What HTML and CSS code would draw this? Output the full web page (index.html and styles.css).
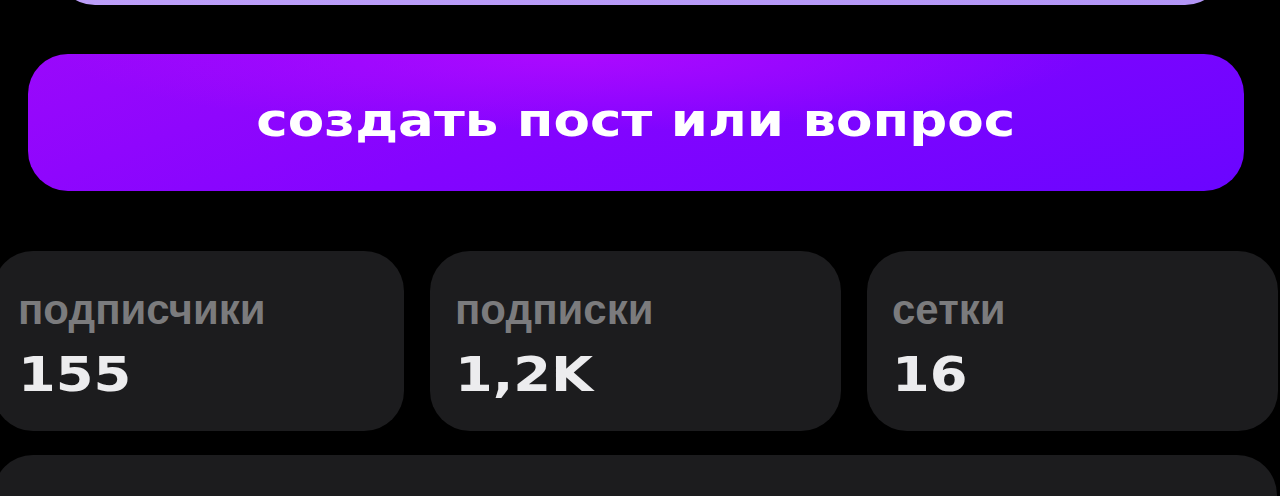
FILE: index.html
```html
<!DOCTYPE html>
<html lang="ru">
<head>
<meta charset="utf-8">
<link rel="stylesheet" href="styles.css">
</head>
<body>
<div class="page">
  <div class="top-pill"></div>
  <button class="create-btn"><span class="create-label">создать пост или вопрос</span></button>
  <div class="stats">
    <div class="stat-card">
      <div class="stat-label">подписчики</div>
      <div class="stat-value">155</div>
    </div>
    <div class="stat-card">
      <div class="stat-label">подписки</div>
      <div class="stat-value">1,2K</div>
    </div>
    <div class="stat-card">
      <div class="stat-label">сетки</div>
      <div class="stat-value">16</div>
    </div>
  </div>
  <div class="bottom-card"></div>
</div>
</body>
</html>
```
FILE: styles.css
```css
html, body {
  margin: 0;
  padding: 0;
  background: #000;
}
body {
  width: 1280px;
  height: 496px;
  overflow: hidden;
}
.page {
  display: flex;
  flex-direction: column;
}
.top-pill {
  height: 60px;
  margin: -55px 55px 0 55px;
  border-radius: 0 0 40px 40px;
  background: linear-gradient(90deg, #bd9ff9, #b295f6);
}
.create-btn {
  margin: 49px 36px 0 28px;
  height: 137px;
  border: 0;
  border-radius: 40px;
  background:
    radial-gradient(ellipse 60% 80% at 45% 0%, rgba(175, 10, 255, 0.9), rgba(175, 10, 255, 0) 70%),
    linear-gradient(160deg, #9a08fb 0%, #8404ff 45%, #6a05ff 100%);
  display: flex;
  align-items: center;
  justify-content: center;
  padding: 0;
}
.create-label {
  font-family: "DejaVu Sans", sans-serif;
  font-weight: bold;
  font-size: 47px;
  color: #fff;
  letter-spacing: 0;
  display: inline-block;
  transform: scaleX(1.13);
  margin-top: -6px;
}
.stats {
  display: flex;
  gap: 26px;
  margin: 60px 0 0 -7px;
}
.stat-card {
  width: 411px;
  height: 180px;
  flex: 0 0 auto;
  box-sizing: border-box;
  padding: 34px 0 0 25px;
  border-radius: 40px;
  background: #1c1c1e;
}
.stat-label {
  font-family: "Liberation Sans", Arial, sans-serif;
  font-weight: bold;
  font-size: 42px;
  line-height: 50px;
  color: #7b7b7d;
}
.stat-value {
  margin-top: 14px;
  font-family: "DejaVu Sans", sans-serif;
  font-weight: bold;
  font-size: 48px;
  line-height: 50px;
  color: #ececee;
  display: inline-block;
  transform-origin: left center;
  transform: scaleX(1.13);
}
.bottom-card {
  margin: 24px 0 0 -7px;
  width: 1284px;
  height: 120px;
  border-radius: 40px;
  background: #1c1c1e;
}
```
